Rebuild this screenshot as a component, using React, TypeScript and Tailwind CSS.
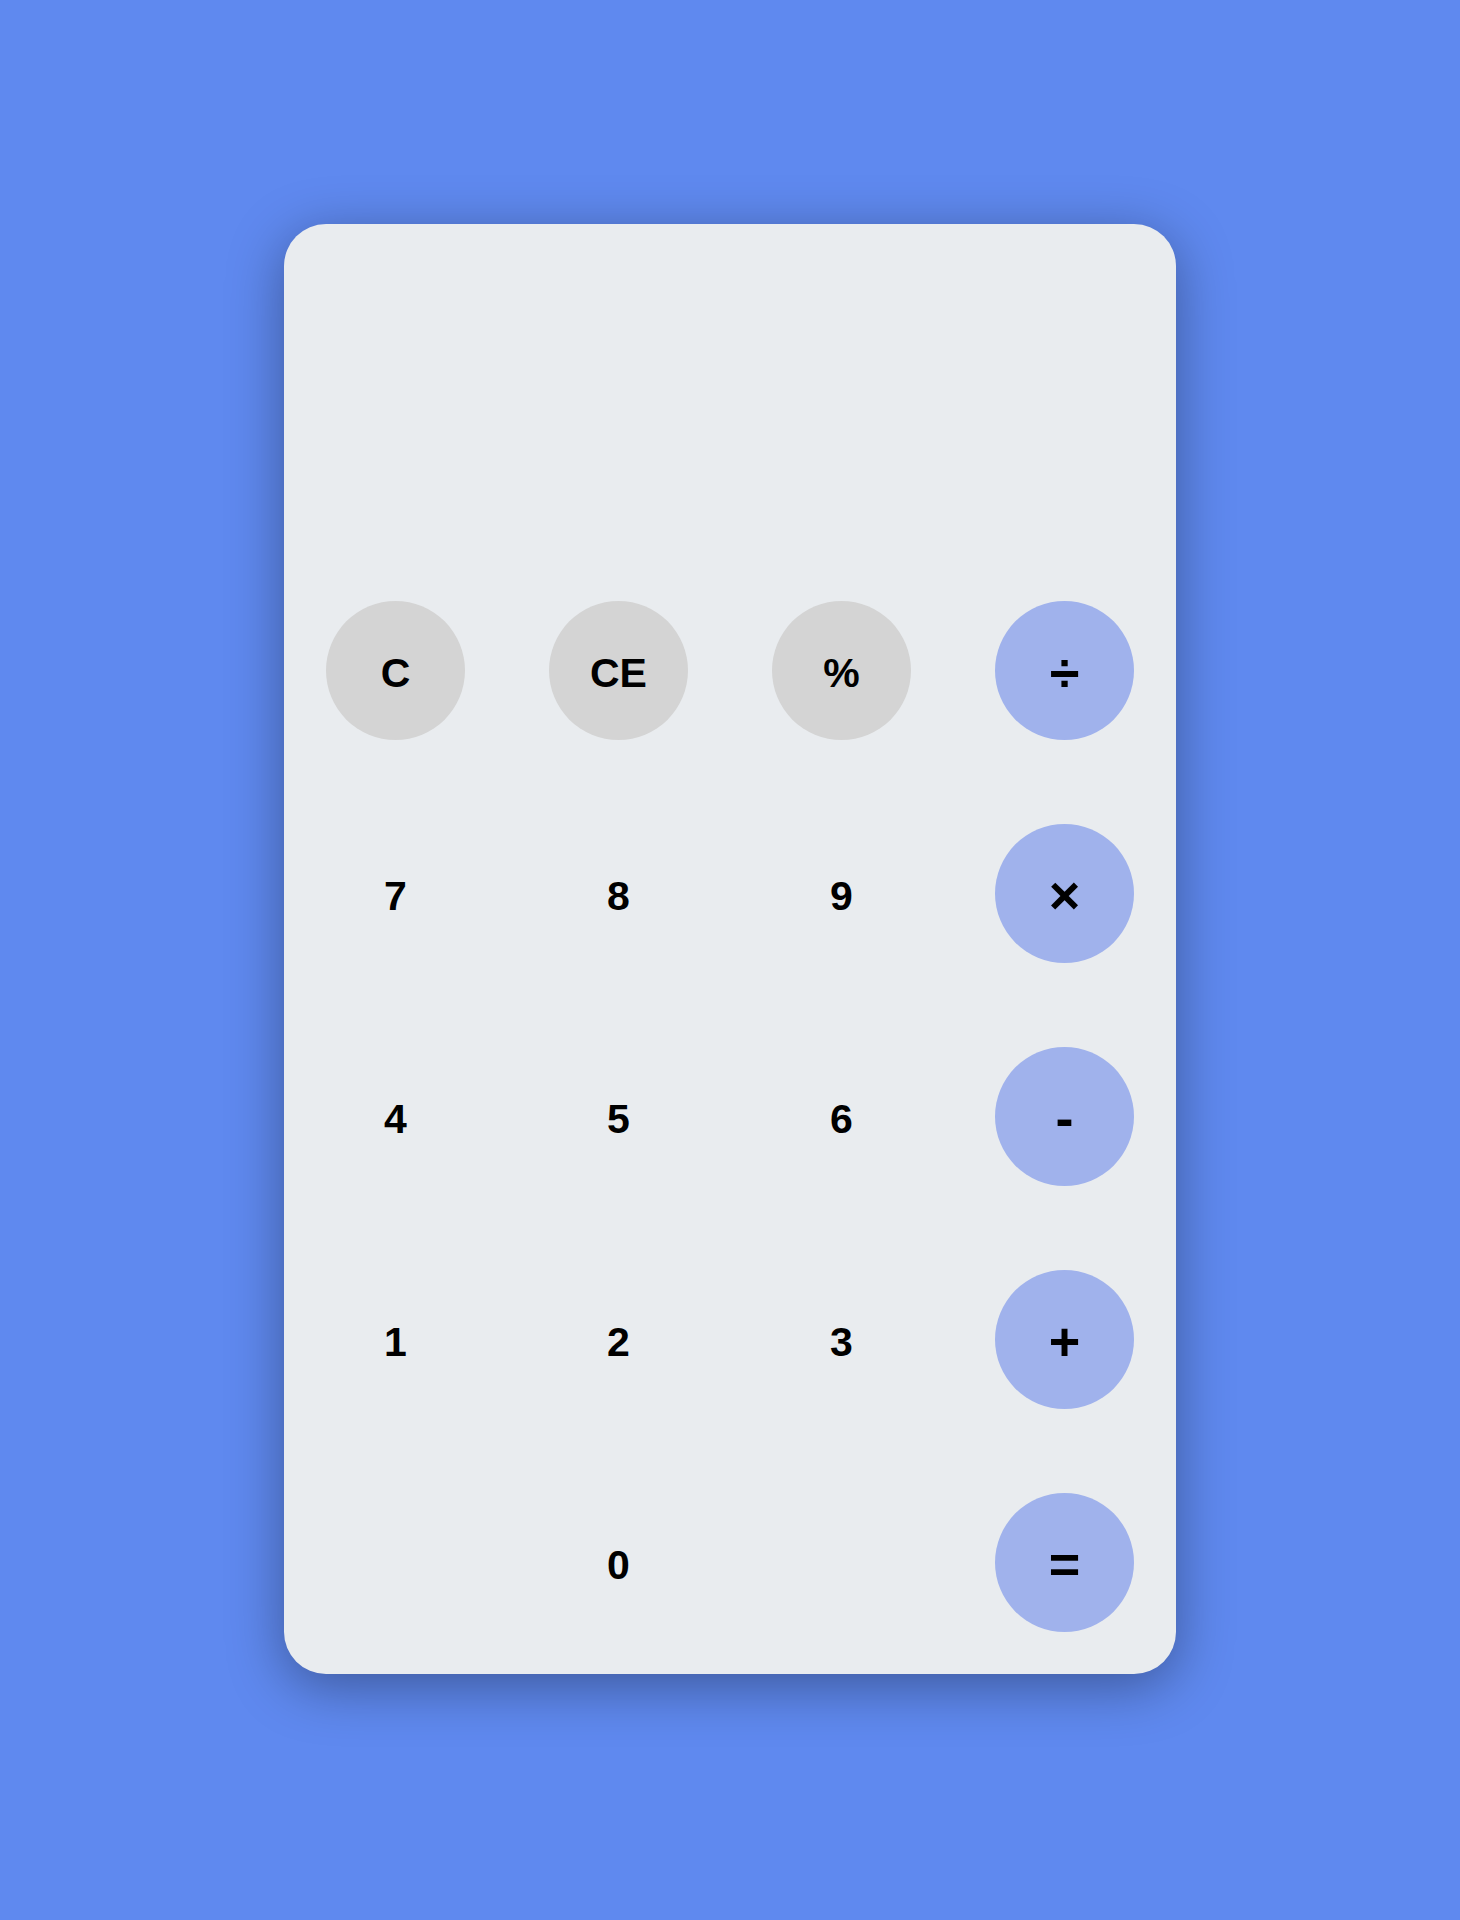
import { FunctionComponent } from "react";

type Key = {
  label: string;
  kind: "fn" | "num" | "op" | "blank";
};

const keys: Key[] = [
  { label: "C", kind: "fn" },
  { label: "CE", kind: "fn" },
  { label: "%", kind: "fn" },
  { label: "÷", kind: "op" },
  { label: "7", kind: "num" },
  { label: "8", kind: "num" },
  { label: "9", kind: "num" },
  { label: "×", kind: "op" },
  { label: "4", kind: "num" },
  { label: "5", kind: "num" },
  { label: "6", kind: "num" },
  { label: "-", kind: "op" },
  { label: "1", kind: "num" },
  { label: "2", kind: "num" },
  { label: "3", kind: "num" },
  { label: "+", kind: "op" },
  { label: "", kind: "blank" },
  { label: "0", kind: "num" },
  { label: "", kind: "blank" },
  { label: "=", kind: "op" },
];

function keyStyle(kind: Key["kind"]) {
  if (kind === "fn") return "bg-[#d4d4d4] text-[41px] pt-[5px]";
  if (kind === "op") return "bg-[#a0b2ec] text-[54px] pt-[3px]";
  return "bg-transparent text-[41px] pt-[5px]";
}

const CalcKey: FunctionComponent<{ k: Key }> = ({ k }) => {
  return (
    <div className="h-[223px] flex items-center justify-center">
      {k.kind !== "blank" && (
        <button
          type="button"
          className={`w-[139px] h-[139px] rounded-full flex items-center justify-center font-bold text-black leading-none ${keyStyle(k.kind)}`}
        >
          {k.label}
        </button>
      )}
    </div>
  );
};

export default function App() {
  return (
    <div
      className="min-h-[1920px] w-full bg-[#5f89ef] flex justify-center pt-[224px]"
      style={{ fontFamily: '"Liberation Sans", Arial, sans-serif' }}
    >
      <div className="w-[892px] h-fit rounded-[42px] bg-[#e9ecef] shadow-[0_12px_55px_rgba(0,0,0,0.36)] overflow-hidden">
        <div className="h-[335px]" />
        <div className="grid grid-cols-4">
          {keys.map((k, i) => (
            <CalcKey key={i} k={k} />
          ))}
        </div>
      </div>
    </div>
  );
}
